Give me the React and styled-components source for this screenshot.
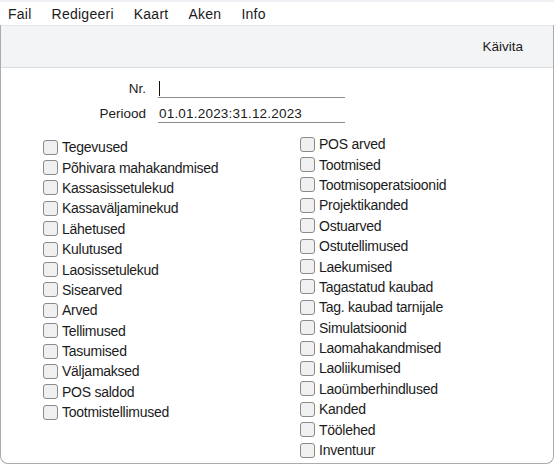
import React from 'react'
import styled, { createGlobalStyle } from 'styled-components'

const GlobalStyle = createGlobalStyle`
  html, body { margin: 0; padding: 0; background: #ffffff; }
  body { font-family: "Liberation Sans", Arial, sans-serif; color: #1b1b1b; }
`

const Window = styled.div`
  width: 554px;
  height: 464px;
  box-sizing: border-box;
  border-top: 2px solid #eef0f3;
  display: flex;
  flex-direction: column;
  overflow: hidden;
`

const MenuBar = styled.div`
  height: 23px;
  display: flex;
  align-items: center;
  gap: 20px;
  padding: 1px 0 0 8px;
  box-sizing: border-box;
  font-size: 14px;
  letter-spacing: 0.25px;
  background: #ffffff;
`

const MenuItem = styled.span`
  color: #1b1b1b;
`

const Body = styled.div`
  flex: 1;
  display: flex;
  flex-direction: column;
  border: 1px solid #a9abae;
  border-top: none;
  border-radius: 0 0 8px 8px;
  overflow: hidden;
`

const Toolbar = styled.div`
  height: 41px;
  display: flex;
  align-items: center;
  justify-content: flex-end;
  padding-right: 30px;
  background: #f3f4f6;
  border-top: 1px solid #e4e6ea;
  border-bottom: 1px solid #d9dce0;
  font-size: 13.5px;
`

const Content = styled.div`
  flex: 1;
  padding-top: 8px;
`

const FieldRow = styled.div`
  display: grid;
  grid-template-columns: 145px 187px;
  column-gap: 12px;
  height: 25px;
  align-items: center;
  font-size: 13.5px;
`

const Label = styled.span`
  text-align: right;
`

const Field = styled.div`
  height: 18px;
  border-bottom: 1px solid #8c8c8c;
  display: flex;
  align-items: center;
  padding-left: 1px;
  letter-spacing: 0.2px;
`

const Caret = styled.span`
  width: 1px;
  height: 15px;
  background: #111;
`

const Columns = styled.div`
  display: grid;
  grid-template-columns: 257px 1fr;
  padding-left: 42px;
  margin-top: 8px;
`

const Column = styled.div`
  display: flex;
  flex-direction: column;
  padding-top: ${p => p.offset || 0}px;
`

const CheckRow = styled.label`
  height: 20.4px;
  display: flex;
  align-items: center;
  gap: 4px;
  font-size: 14px;
  letter-spacing: -0.25px;
`

const Box = styled.span`
  width: 13px;
  height: 13px;
  border: 1px solid #8a8a8a;
  border-radius: 3px;
  background: #f0f0f0;
  flex-shrink: 0;
`

const left = [
  'Tegevused', 'Põhivara mahakandmised', 'Kassasissetulekud', 'Kassaväljaminekud',
  'Lähetused', 'Kulutused', 'Laosissetulekud', 'Sisearved', 'Arved', 'Tellimused',
  'Tasumised', 'Väljamaksed', 'POS saldod', 'Tootmistellimused'
]

const right = [
  'POS arved', 'Tootmised', 'Tootmisoperatsioonid', 'Projektikanded', 'Ostuarved',
  'Ostutellimused', 'Laekumised', 'Tagastatud kaubad', 'Tag. kaubad tarnijale',
  'Simulatsioonid', 'Laomahakandmised', 'Laoliikumised', 'Laoümberhindlused',
  'Kanded', 'Töölehed', 'Inventuur'
]

const menu = ['Fail', 'Redigeeri', 'Kaart', 'Aken', 'Info']

export default function App() {
  return (
    <>
      <GlobalStyle />
      <Window>
        <MenuBar>
          {menu.map(m => <MenuItem key={m}>{m}</MenuItem>)}
        </MenuBar>
        <Body>
          <Toolbar>Käivita</Toolbar>
          <Content>
            <FieldRow>
              <Label>Nr.</Label>
              <Field><Caret /></Field>
            </FieldRow>
            <FieldRow>
              <Label>Periood</Label>
              <Field>01.01.2023:31.12.2023</Field>
            </FieldRow>
            <Columns>
              <Column offset={3}>
                {left.map(t => (
                  <CheckRow key={t}><Box />{t}</CheckRow>
                ))}
              </Column>
              <Column>
                {right.map(t => (
                  <CheckRow key={t}><Box />{t}</CheckRow>
                ))}
              </Column>
            </Columns>
          </Content>
        </Body>
      </Window>
    </>
  )
}
